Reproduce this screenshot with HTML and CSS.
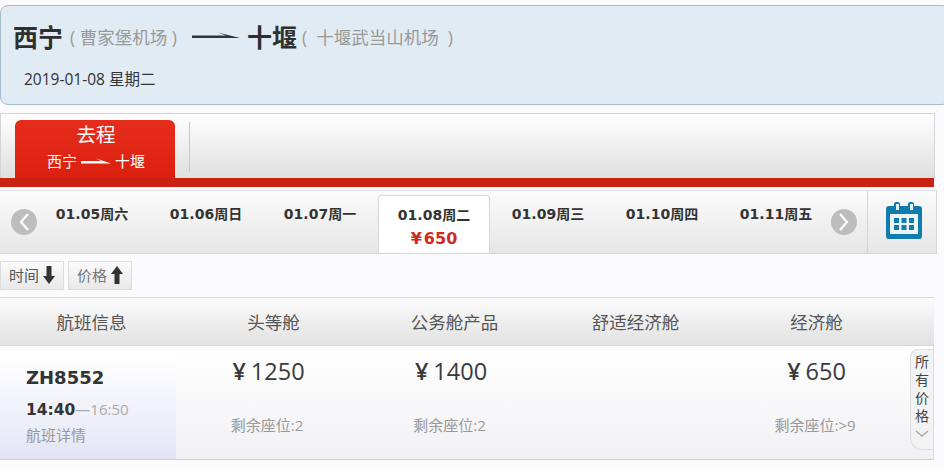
FILE: index.html
```html
<!DOCTYPE html>
<html lang="zh-CN">
<head>
    <meta charset="UTF-8">
    <meta name="viewport" content="width=device-width, initial-scale=1.0">
    <title>西宁 - 十堰</title>
    <link rel="stylesheet" href="styles.css">
</head>
<body>
    <div class="route">
        <div class="route-line">
            <span class="city">西宁</span>
            <span class="airport airport-from">( 曹家堡机场 )</span>
            <svg class="route-arrow" width="48" height="8" viewBox="0 0 48 8"><path d="M0 3.500h34L26 .5l22 5.500H0z" fill="#333"/></svg>
            <span class="city">十堰</span>
            <span class="airport">(&nbsp; 十堰武当山机场 &nbsp;)</span>
        </div>
        <div class="route-date">2019-01-08 星期二</div>
    </div>

    <div class="tabs">
        <div class="tab">
            <div class="tab-title">去程</div>
            <div class="tab-route">西宁
                <svg width="30" height="7" viewBox="0 0 30 7"><path d="M0 3h20L15 .5l15 5H0z" fill="#fff"/></svg>
                十堰</div>
        </div>
        <div class="tab-sep"></div>
    </div>
    <div class="red-bar"></div>

    <div class="dates">
        <div class="nav-cell">
            <div class="circle"><svg width="12" height="20" viewBox="0 0 12 20"><path d="M10 2L3 10l7 8" fill="none" stroke="#fff" stroke-width="2.2"/></svg></div>
        </div>
        <div class="date-list">
            <div class="date">01.05周六</div>
            <div class="date">01.06周日</div>
            <div class="date">01.07周一</div>
            <div class="date active">01.08周二<div class="date-price"><span class="yen">¥</span>650</div></div>
            <div class="date">01.09周三</div>
            <div class="date">01.10周四</div>
            <div class="date">01.11周五</div>
        </div>
        <div class="nav-cell nav-right">
            <div class="circle"><svg width="12" height="20" viewBox="0 0 12 20"><path d="M2 2l7 8-7 8" fill="none" stroke="#fff" stroke-width="2.2"/></svg></div>
        </div>
        <div class="calendar">
            <svg width="36" height="37" viewBox="0 0 36 37">
                <path d="M3 4h5V2a2 2 0 0 1 2-2h2a2 2 0 0 1 2 2v2h8V2a2 2 0 0 1 2-2h2a2 2 0 0 1 2 2v2h5a3 3 0 0 1 3 3v27a3 3 0 0 1-3 3H3a3 3 0 0 1-3-3V7a3 3 0 0 1 3-3z" fill="#0f7cab"/>
                <rect x="10" y="2" width="3" height="6" fill="#e9eef0"/>
                <rect x="24" y="2" width="3" height="6" fill="#e9eef0"/>
                <rect x="4" y="12" width="28" height="20" fill="#e9f3f6"/>
                <path d="M8 16h5v5H8zM15.500 16h5v5h-5zM23 16h5v5h-5zM8 23h5v5H8zM15.500 23h5v5h-5zM23 23h5v5h-5z" fill="#0f7cab"/>
            </svg>
        </div>
    </div>

    <div class="sort">
        <div class="sort-btn">时间 <svg width="12" height="18" viewBox="0 0 12 18"><path d="M3.500 0h5v10H12l-6 8-6-8h3.500z" fill="#333"/></svg></div>
        <div class="sort-btn sort-price">价格 <svg width="12" height="18" viewBox="0 0 12 18"><path d="M3.500 18h5V8H12L6 0 0 8h3.500z" fill="#333"/></svg></div>
    </div>

    <div class="flight-head">
        <div class="cell-info">航班信息</div>
        <div class="cell">头等舱</div>
        <div class="cell">公务舱产品</div>
        <div class="cell">舒适经济舱</div>
        <div class="cell">经济舱</div>
    </div>

    <div class="flight">
        <div class="flight-info">
            <div class="flight-no">ZH8552</div>
            <div class="flight-time"><b>14:40</b>—16:50</div>
            <div class="flight-detail">航班详情</div>
        </div>
        <div class="fare">
            <div class="fare-price"><span class="yen">¥</span>1250</div>
            <div class="fare-seats">剩余座位:2</div>
        </div>
        <div class="fare">
            <div class="fare-price"><span class="yen">¥</span>1400</div>
            <div class="fare-seats">剩余座位:2</div>
        </div>
        <div class="fare"></div>
        <div class="fare">
            <div class="fare-price"><span class="yen">¥</span>650</div>
            <div class="fare-seats">剩余座位:&gt;9</div>
        </div>
        <div class="all-prices">
            <span>所有价格</span>
            <svg width="14" height="8" viewBox="0 0 14 8"><path d="M1 1l6 5 6-5" fill="none" stroke="#aaa" stroke-width="1.500"/></svg>
        </div>
    </div>
</body>
</html>
```

FILE: styles.css
```css
body {
    margin: 0;
    height: 469px;
    overflow: hidden;
    background-color: #fbfbfd;
    font-family: "Open Sans", "Noto Sans CJK SC", sans-serif;
    color: #333;
}

svg {
    display: block;
    flex: none;
}

.route {
    box-sizing: border-box;
    height: 100px;
    width: 950px;
    margin-top: 5px;
    padding: 12px 12px 0;
    background-color: #e1ebf4;
    border: 1px solid #a5bccb;
    border-radius: 8px;
}

.route-line {
    display: flex;
    align-items: center;
    height: 36px;
}

.city {
    font-size: 25px;
    font-weight: 700;
    color: #2f2f2f;
}

.airport {
    margin-left: 5px;
    font-size: 17.5px;
    color: #999;
}

.airport-from {
    margin-left: 7px;
    margin-right: 15px;
}

.route-arrow {
    margin-right: 7px;
}

.route-date {
    margin: 13px 0 0 11px;
    font-size: 15.5px;
    color: #333;
}

.tabs {
    box-sizing: border-box;
    display: flex;
    width: 935px;
    height: 65px;
    margin-top: 8px;
    padding: 6px 0 0 14px;
    background: linear-gradient(#fff, #dfdfdf);
    border: 1px solid #d4d4d4;
    border-bottom: 0;
}

.tab {
    box-sizing: border-box;
    width: 160px;
    padding-left: 2px;
    color: #fff;
    text-align: center;
    background: linear-gradient(#e62d1c, #dc2010);
    border-radius: 6px 6px 0 0;
}

.tab-title {
    margin-top: 2px;
    font-size: 19.5px;
    line-height: 26px;
}

.tab-route {
    display: flex;
    justify-content: center;
    align-items: center;
    gap: 4px;
    margin-top: 2px;
    font-size: 15px;
    line-height: 22px;
}

.tab-sep {
    width: 1px;
    height: 50px;
    margin: 2px 0 0 14px;
    background-color: #c8c8c8;
}

.red-bar {
    width: 934px;
    height: 9px;
    background-color: #c9220f;
}

.dates {
    box-sizing: border-box;
    display: flex;
    width: 937px;
    height: 64px;
    margin-top: 3px;
    background: linear-gradient(#fbfbfb, #e6e6e6);
    border-top: 1px solid #e2e2e2;
    border-right: 1px solid #d8d8d8;
    border-bottom: 1px solid #d4d4d4;
}

.nav-cell {
    width: 35px;
    flex: none;
    padding: 18px 0 0 11px;
    box-sizing: border-box;
}

.circle {
    display: flex;
    justify-content: center;
    align-items: center;
    width: 26px;
    height: 26px;
    background-color: #bdbdbd;
    border-radius: 50%;
}

.date-list {
    display: grid;
    grid-template-columns: repeat(7, 114px);
    width: 798px;
}

.date {
    padding-top: 12px;
    font-family: "DejaVu Sans", "Noto Sans CJK SC", sans-serif;
    font-size: 14px;
    font-weight: 700;
    line-height: 22px;
    text-align: center;
}

.date.active {
    height: 58px;
    margin: 4px 1px -1px;
    padding-top: 8px;
    box-sizing: border-box;
    background-color: #fff;
    border: 1px solid #d8d8d8;
    border-bottom: 0;
    border-radius: 4px 4px 0 0;
}

.date-price {
    margin-top: 1px;
    font-size: 16px;
    color: #cf2a20;
    line-height: 24px;
}

.date-price .yen {
    margin-right: 2px;
}

.nav-right {
    width: 36px;
    padding-left: 0;
    margin-left: -2px;
}

.calendar {
    box-sizing: border-box;
    display: flex;
    justify-content: center;
    padding: 11px 0 0 3px;
    flex: 1;
    border-left: 1px solid #d4d4d4;
}

.sort {
    display: flex;
    gap: 4px;
    height: 29px;
    margin-top: 7px;
}

.sort-btn {
    box-sizing: border-box;
    display: flex;
    align-items: center;
    justify-content: center;
    gap: 4px;
    width: 64px;
    height: 29px;
    padding-bottom: 2px;
    font-size: 15px;
    color: #555;
    background: linear-gradient(#fafafa, #e9e9e9);
    border: 1px solid #dcdcdc;
}

.sort-price {
    color: #777;
}

.flight-head {
    box-sizing: border-box;
    display: flex;
    align-items: center;
    width: 934px;
    height: 49px;
    margin-top: 7px;
    font-size: 17.5px;
    color: #555;
    background: linear-gradient(#fbfbfb, #e2e2e2);
    border-top: 1px solid #d8d8d8;
    border-bottom: 1px solid #d8d8d8;
}

.cell-info {
    width: 183px;
    text-align: center;
}

.cell {
    width: 181px;
    text-align: center;
}

.flight {
    box-sizing: border-box;
    position: relative;
    display: grid;
    grid-template-columns: 178px 181px 184px 183px 181px;
    width: 934px;
    height: 114px;
    background: linear-gradient(#fff, #f1f1f4);
    border-bottom: 1px solid #cfcfcf;
    border-right: 1px solid #ddd;
}

.flight-info {
    box-sizing: border-box;
    width: 176px;
    padding: 18px 0 0 26px;
    background: linear-gradient(#fff 10%, #e3e5f5);
}

.flight-no {
    font-family: "DejaVu Sans", sans-serif;
    font-size: 18px;
    font-weight: 700;
    line-height: 28px;
}

.flight-time {
    margin-top: 5px;
    font-size: 15px;
    line-height: 24px;
    color: #aaa;
}

.flight-time b {
    font-family: "DejaVu Sans", sans-serif;
    font-size: 15.5px;
    color: #333;
}

.flight-detail {
    margin-top: 3px;
    font-size: 15px;
    line-height: 20px;
    color: #999;
}

.fare {
    text-align: center;
}

.fare-price {
    margin-top: 8px;
    font-size: 23.5px;
    line-height: 34px;
    color: #3a3a3a;
}

.fare-price .yen {
    margin-right: 5px;
    font-weight: 600;
}

.fare-seats {
    margin-top: 26px;
    padding-right: 3px;
    font-size: 15px;
    line-height: 22px;
    color: #999;
}

.all-prices {
    box-sizing: border-box;
    position: absolute;
    top: 3px;
    right: 0;
    width: 23px;
    height: 101px;
    padding-top: 3px;
    font-size: 14px;
    line-height: 18px;
    color: #444;
    text-align: center;
    background-color: #f3f3f3;
    border: 1px solid #ddd;
    border-right: 0;
    border-radius: 8px 0 0 12px;
}

.all-prices span {
    display: block;
    width: 15px;
    margin: 0 auto;
}

.all-prices svg {
    margin: 5px auto 0;
}
```
